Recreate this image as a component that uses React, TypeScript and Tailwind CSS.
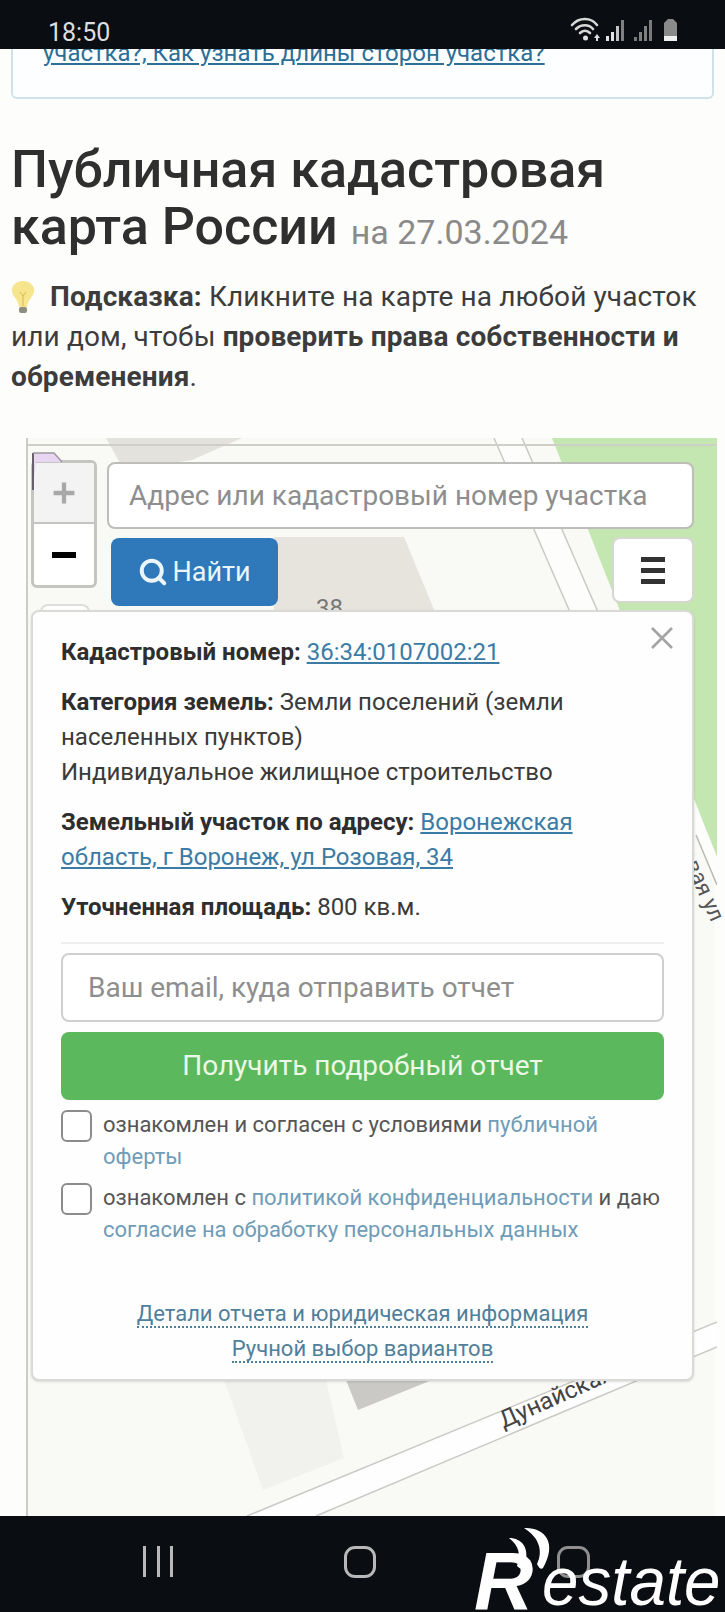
import { Search } from "lucide-react";

function StatusIcons() {
  return (
    <svg width="110" height="26" viewBox="0 0 110 26" className="mt-[17px]">
      <g fill="none" stroke="#d8d8d8" strokeWidth="2.6" strokeLinecap="round">
        <path d="M2 8 C9 0 21 0 27 8" />
        <path d="M6 12 C11 7 19 7 23 12" />
        <path d="M10 16 C13 13 17 13 20 16" />
      </g>
      <circle cx="15.5" cy="21" r="2.5" fill="#e0e0e0" />
      <path d="M24 21 l3 -4 l3 4 z M26 21 h2 v3 h-2 z" fill="#e0e0e0" />
      <rect x="36" y="19" width="3" height="5" fill="#e4e4e4" />
      <rect x="41" y="15" width="3" height="9" fill="#e4e4e4" />
      <rect x="46" y="9" width="3" height="15" fill="#c4c4c4" />
      <rect x="51" y="3" width="3" height="21" fill="#808080" />
      <rect x="64" y="20" width="3" height="4" fill="#777" />
      <rect x="69" y="15" width="3" height="9" fill="#808080" />
      <rect x="74" y="9" width="3" height="15" fill="#808080" />
      <rect x="79" y="3" width="3" height="21" fill="#7a7a7a" />
      <path d="M94 6 L98 2 H103 L107 6 V20 H94 Z" fill="#8a8a8a" />
      <rect x="94" y="19" width="13" height="5" fill="#f0f0f0" />
    </svg>
  );
}

function Bulb() {
  return (
    <svg width="26" height="34" viewBox="0 0 26 34" className="-my-[10px] -ml-[1px] mr-[14px] inline-block align-[2px]">
      <path d="M13 1 C5 1 1 7 2 12 C3 17 8 19 9 27 H17 C18 19 23 17 24 12 C25 7 21 1 13 1 Z" fill="#f6e58d" />
      <path d="M10 12 L13 16 L16 12 M13 16 V26" stroke="#d9b84a" strokeWidth="1" fill="none" />
      <rect x="9" y="27" width="8" height="6" rx="2" fill="#8d8d80" />
    </svg>
  );
}

function MapDrawing() {
  return (
    <svg className="absolute inset-0" width="689" height="1078" viewBox="26 438 689 1078">
      <polygon points="104,438 240,438 190,460 122,470" fill="#e3e2dc" />
      <polygon points="272,537 402,537 433,612 272,612" fill="#e7e4de" />
      <polygon points="550,438 715,438 715,857" fill="#c4e6b0" />
      <polygon points="492,438 520,438 596,612 568,612" fill="#fdfdfc" />
      <line x1="492" y1="438" x2="568" y2="612" stroke="#c9c9c6" strokeWidth="1.5" />
      <line x1="520" y1="438" x2="596" y2="612" stroke="#c9c9c6" strokeWidth="1.5" />
      <line x1="26" y1="445" x2="715" y2="445" stroke="#cfcfca" strokeWidth="2" />
      <polygon points="694,835 715,885 715,857 694,807" fill="#fdfdfc" />
      <line x1="694" y1="835" x2="715" y2="885" stroke="#b9b9b6" strokeWidth="1.5" />
      <polygon points="222,1380 324,1380 342,1458 261,1490" fill="#f1f1ee" />
      <polygon points="344,1380 430,1380 356,1410" fill="#cbc9c6" />
      <polygon points="245,1516 694,1330 715,1322 715,1347 694,1357 314,1516" fill="#fefefe" />
      <line x1="245" y1="1516" x2="715" y2="1322" stroke="#c9c9c5" strokeWidth="1.5" />
      <line x1="314" y1="1516" x2="715" y2="1347" stroke="#c9c9c5" strokeWidth="1.5" />
    </svg>
  );
}

function Check({ children }: { children: React.ReactNode }) {
  return (
    <div className="flex gap-[11px]">
      <span className="mt-[1px] h-[32px] w-[31px] shrink-0 rounded-[6px] border-2 border-[#8c8c8c] bg-white" />
      <p className="text-[22px] leading-[32px] text-[#555555]">{children}</p>
    </div>
  );
}

function Row({ children }: { children: React.ReactNode }) {
  return <p className="mb-[15px] text-[24px] leading-[35px] text-[#3a3a3a]">{children}</p>;
}

export default function App() {
  return (
    <div
      className="flex h-[1612px] w-[725px] flex-col overflow-hidden bg-[#fdfdfc] text-[#333333]"
      style={{ fontFamily: "Roboto, sans-serif" }}
    >
      <header className="z-10 flex h-[49px] shrink-0 items-start justify-between bg-[#0a0e13] pl-[48px] pr-[45px]">
        <span className="mt-[18px] text-[25px] leading-[30px] text-[#dedede]">18:50</span>
        <StatusIcons />
      </header>

      <div className="mx-[11px] h-[50px] shrink-0 overflow-hidden rounded-b-[6px] border-x-2 border-b-2 border-[#cfe2ec] bg-[#fdfeff] pl-[30px]">
        <a className="-mt-[10px] block whitespace-nowrap text-[24px] leading-[28px] text-[#2d6f95] underline">
          участка?, Как узнать длины сторон участка?
        </a>
      </div>

      <h1 className="mt-[42px] pl-[11px] text-[52px] font-medium leading-[57px] text-[#2f2f2f]">
        Публичная кадастровая
        <br />
        карта России <small className="text-[34px] font-normal text-[#8a8a8a]">на 27.03.2024</small>
      </h1>

      <p className="mt-[16px] pl-[11px] pr-[10px] text-[28px] leading-[40px] tracking-[0.12px] text-[#3c3c3c]">
        <Bulb />
        <b className="font-bold">Подсказка:</b> Кликните на карте на любой участок или дом, чтобы{" "}
        <b className="font-bold">проверить права собственности и обременения</b>.
      </p>

      <section className="relative ml-[26px] mt-[41px] w-[689px] flex-1 border-l-2 border-[#cbcbc8] bg-[#f9faf6]">
        <MapDrawing />

        <span className="absolute left-[288px] top-[156px] text-[24px] leading-[28px] text-[#777777]">38</span>
        <span className="absolute left-[478px] top-[968px] origin-bottom-left -rotate-[24deg] whitespace-nowrap text-[24px] leading-[28px] text-[#444444]">
          Дунайская ул
        </span>
        <span className="absolute left-[655px] top-[372px] origin-top-left rotate-[66deg] whitespace-nowrap text-[22px] leading-[26px] text-[#555555]">
          Розовая ул
        </span>

        <div className="absolute left-[3px] top-[22px] flex h-[128px] w-[66px] flex-col overflow-hidden rounded-[6px] border-[3px] border-[#c4c4c0] bg-white">
          <div className="flex h-[61px] items-center justify-center border-b-2 border-[#c4c4c0] bg-[#f3f3f3] text-[#a8a8a8]">
            <svg width="26" height="26" viewBox="0 0 30 30"><path d="M15 3 V27 M3 15 H27" stroke="currentColor" strokeWidth="5" /></svg>
          </div>
          <div className="flex flex-1 items-center justify-center text-black">
            <svg width="24" height="6" viewBox="0 0 24 6"><rect width="24" height="6" fill="currentColor" /></svg>
          </div>
        </div>

        <svg className="absolute left-[2px] top-[10px]" width="36" height="46" viewBox="0 0 36 46">
          <path d="M3 5 H24 L32 14 L6 14 L4 30 Z" fill="#e8d5f2" />
          <path d="M3 5 V42" stroke="#66606a" strokeWidth="2" />
          <path d="M3 5 H24 L32 14" stroke="#9d97a0" strokeWidth="1.5" fill="none" />
        </svg>

        <div className="absolute left-[79px] top-[24px] flex h-[67px] w-[587px] items-center rounded-[8px] border-2 border-[#bdbdb9] bg-white pl-[20px] text-[28px] text-[#8e8e8e]">
          Адрес или кадастровый номер участка
        </div>
        <button className="absolute left-[83px] top-[100px] flex h-[68px] w-[167px] items-center justify-center gap-[4px] rounded-[8px] bg-[#2f78ba] text-[27px] text-[#eaf6fb]">
          <Search size={30} strokeWidth={3.2} />
          Найти
        </button>
        <button className="absolute left-[584px] top-[99px] flex h-[66px] w-[82px] flex-col items-center justify-center gap-[6px] rounded-[8px] border-2 border-[#d6d6d2] bg-white">
          <span className="h-[5px] w-[24px] bg-[#333333]" />
          <span className="h-[5px] w-[24px] bg-[#333333]" />
          <span className="h-[5px] w-[24px] bg-[#333333]" />
        </button>
        <div className="absolute left-[12px] top-[166px] h-[8px] w-[50px] rounded-t-[8px] border-2 border-b-0 border-[#dededb] bg-white" />

        <div className="absolute left-[3px] top-[172px] h-[771px] w-[663px] rounded-[8px] border-2 border-[#d9d9d6] bg-[#fefefe] px-[28px] pt-[23px] shadow-sm">
          <svg className="absolute right-[18px] top-[14px]" width="24" height="24" viewBox="0 0 24 24">
            <path d="M2 2 L22 22 M22 2 L2 22" stroke="#a3a3a3" strokeWidth="2.6" />
          </svg>
          <Row>
            <b className="font-bold text-[#2e2e2e]">Кадастровый номер:</b>{" "}
            <a className="text-[#3a7ca5] underline">36:34:0107002:21</a>
          </Row>
          <Row>
            <b className="font-bold text-[#2e2e2e]">Категория земель:</b> Земли поселений (земли населенных пунктов)
            <br />
            Индивидуальное жилищное строительство
          </Row>
          <Row>
            <b className="font-bold text-[#2e2e2e]">Земельный участок по адресу:</b>{" "}
            <a className="text-[#3a7ca5] underline">Воронежская область, г Воронеж, ул Розовая, 34</a>
          </Row>
          <Row>
            <b className="font-bold text-[#2e2e2e]">Уточненная площадь:</b> 800 кв.м.
          </Row>
          <hr className="mt-[17px] border-t-2 border-[#eeeeec]" />
          <div className="mt-[9px] flex h-[69px] items-center rounded-[8px] border-2 border-[#cfcfcd] bg-white pl-[25px] text-[28px] text-[#8e8e8e]">
            Ваш email, куда отправить отчет
          </div>
          <button className="mt-[10px] block h-[68px] w-full rounded-[8px] bg-[#5cb85c] text-[28px] text-[#ecf8e8]">
            Получить подробный отчет
          </button>
          <div className="mt-[9px] flex flex-col gap-[9px]">
            <Check>
              ознакомлен и согласен с условиями <span className="text-[#6f9cb8]">публичной оферты</span>
            </Check>
            <Check>
              ознакомлен с <span className="text-[#6f9cb8]">политикой конфиденциальности</span> и даю{" "}
              <span className="text-[#6f9cb8]">согласие на обработку персональных данных</span>
            </Check>
          </div>
          <div className="mt-[50px] flex flex-col items-center text-[22px] leading-[35px] text-[#4f7f9b]">
            <span><span className="border-b-2 border-dotted border-[#4f7f9b]">Детали отчета и юридическая информация</span></span>
            <span><span className="border-b-2 border-dotted border-[#4f7f9b]">Ручной выбор вариантов</span></span>
          </div>
        </div>
      </section>

      <nav className="relative flex h-[96px] shrink-0 items-start bg-[#0a0e13] pl-[143px] pt-[30px]">
        <div className="flex h-[31px] w-[30px] justify-between">
          <span className="h-full w-[3px] bg-[#b8b8b8]" />
          <span className="h-full w-[3px] bg-[#b8b8b8]" />
          <span className="h-full w-[3px] bg-[#b8b8b8]" />
        </div>
        <span className="ml-[171px] h-[32px] w-[32px] rounded-[11px] border-[3px] border-[#b8b8b8]" />
        <span className="ml-[181px] h-[32px] w-[33px] rounded-[11px] border-[3px] border-[#8f8f8f]" />

        <div className="absolute inset-0 overflow-hidden" style={{ fontFamily: '"Liberation Sans", sans-serif' }}>
          <span className="absolute left-[474px] top-[18px] text-[82px] font-bold italic leading-[94px] text-white">R</span>
          <span className="absolute left-[542px] top-[26px] origin-left scale-x-[0.95] text-[69px] italic leading-[79px] text-white">estate</span>
          <svg className="absolute left-[500px] top-[8px]" width="62" height="48" viewBox="0 0 62 48">
            <path d="M9 14 C22 14 31 24 24 44 C22 46 19 44 17 42 C21 30 19 22 9 14 Z" fill="#fff" />
            <path d="M24 4 C44 3 58 18 43 44 C41 46 39 44 37 40 C43 28 40 14 24 4 Z" fill="#fff" />
          </svg>
        </div>
      </nav>
    </div>
  );
}
